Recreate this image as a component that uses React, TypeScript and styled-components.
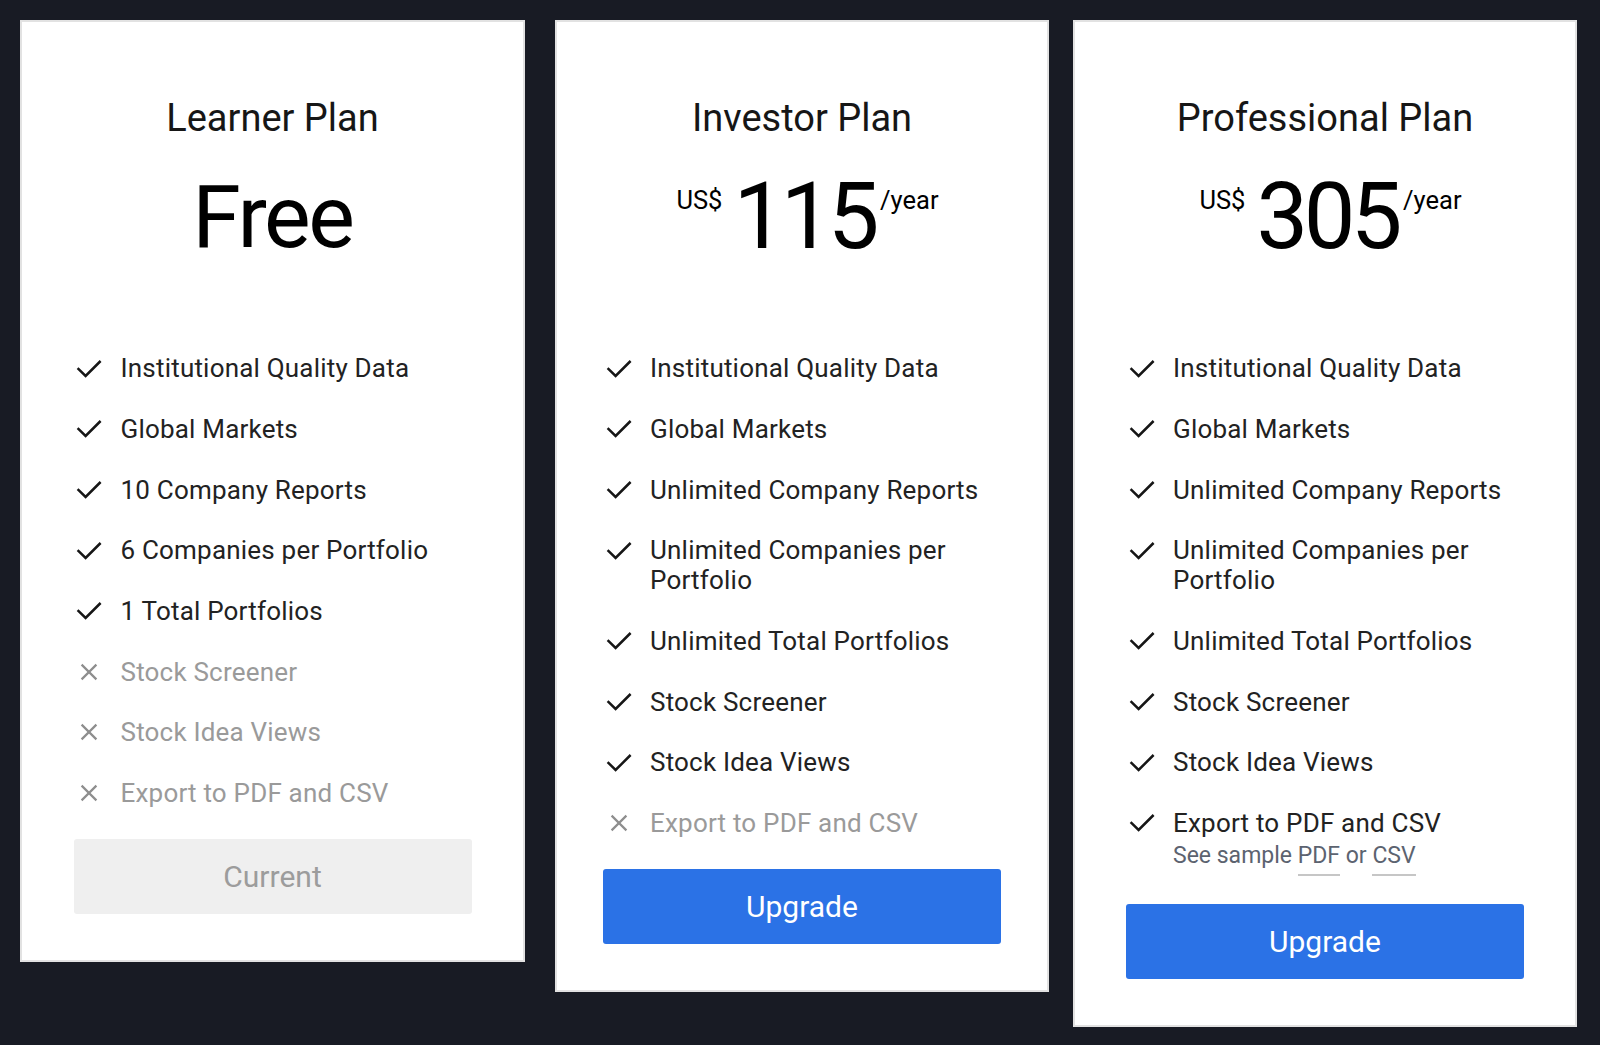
import React from 'react';
import styled, { createGlobalStyle } from 'styled-components';

const GlobalStyle = createGlobalStyle`
  html, body {
    margin: 0;
    padding: 0;
    background: #181b24;
  }
  body {
    font-family: Roboto, "Liberation Sans", Arial, sans-serif;
    -webkit-font-smoothing: antialiased;
  }
  * { box-sizing: border-box; }
`;

const Page = styled.main`
  display: flex;
  align-items: flex-start;
  padding: 20px 0 0 20px;
  min-height: 1045px;
`;

const Card = styled.section<{ $width: number; $gap: number }>`
  width: ${(p) => p.$width}px;
  margin-left: ${(p) => p.$gap}px;
  background: #ffffff;
  border: 2px solid #e2e2e2;
  padding: 73.7px 0 45.8px;
  display: flex;
  flex-direction: column;
  align-items: center;
`;

const Title = styled.h2`
  margin: 0;
  font-size: 38px;
  line-height: 44px;
  font-weight: 400;
  color: #161616;
`;

const PriceRow = styled.div<{ $shift: number }>`
  margin-top: 32.3px;
  height: 90px;
  display: flex;
  align-items: flex-start;
  padding-left: ${(p) => p.$shift}px;
  color: #000000;
`;

const Amount = styled.span<{ $size: number; $track: number }>`
  font-size: ${(p) => p.$size}px;
  letter-spacing: ${(p) => p.$track}px;
  line-height: 90px;
  font-weight: 400;
`;

const Sup = styled.span<{ $side: 'left' | 'right' }>`
  font-size: 25.5px;
  line-height: 26px;
  margin-top: 14.6px;
  margin-right: ${(p) => (p.$side === 'left' ? '11px' : '0')};
  margin-left: ${(p) => (p.$side === 'right' ? '5px' : '0')};
`;

const List = styled.ul`
  list-style: none;
  margin: 91.2px 0 0;
  padding: 0;
  width: 398px;
`;

const Item = styled.li<{ $off: boolean }>`
  display: flex;
  align-items: flex-start;
  margin-bottom: 30.7px;
  font-size: 26px;
  line-height: 30px;
  letter-spacing: 0.2px;
  color: ${(p) => (p.$off ? '#9a9a9a' : '#222222')};
`;

const IconBox = styled.span`
  flex: 0 0 31px;
  height: 30px;
  margin-right: 16px;
  display: flex;
  align-items: center;
  justify-content: center;
`;

const Label = styled.div`
  flex: 1;
  min-width: 0;
`;

const SubLine = styled.div`
  margin-top: 2.7px;
  height: 32.2px;
  font-size: 23px;
  line-height: 30px;
  letter-spacing: 0;
  color: #5c6370;
`;

const SampleLink = styled.a`
  display: inline-block;
  color: inherit;
  text-decoration: none;
  padding-bottom: 3px;
  line-height: 30px;
  border-bottom: 2px solid #c6c6c6;
`;

const Button = styled.button<{ $primary: boolean }>`
  width: 398px;
  height: 75.5px;
  border: none;
  border-radius: 3px;
  font-family: inherit;
  font-size: 30px;
  font-weight: 400;
  display: flex;
  align-items: center;
  justify-content: center;
  cursor: pointer;
  background: ${(p) => (p.$primary ? '#2b72e6' : '#efefef')};
  color: ${(p) => (p.$primary ? '#ffffff' : '#9c9c9c')};
`;

const CheckIcon = () => (
  <svg width="26" height="19" viewBox="0 0 26 19" fill="none">
    <polyline points="1.6,9.2 9.6,17 24.6,2" stroke="#161616" strokeWidth="2.5" strokeLinejoin="miter" />
  </svg>
);

const CrossIcon = () => (
  <svg width="18" height="18" viewBox="0 0 18 18" fill="none">
    <path d="M1.6 1.6 L16.4 16.4 M16.4 1.6 L1.6 16.4" stroke="#8e8e8e" strokeWidth="2.2" />
  </svg>
);

type Feature = { text: string; on: boolean; sample?: boolean };

type Plan = {
  name: string;
  width: number;
  gap: number;
  price?: string;
  freeLabel?: string;
  features: Feature[];
  current: boolean;
};

const base = (reports: string, perPortfolio: string, total: string): Feature[] => [
  { text: 'Institutional Quality Data', on: true },
  { text: 'Global Markets', on: true },
  { text: reports, on: true },
  { text: perPortfolio, on: true },
  { text: total, on: true },
];

const plans: Plan[] = [
  {
    name: 'Learner Plan',
    width: 505,
    gap: 0,
    freeLabel: 'Free',
    current: true,
    features: [
      ...base('10 Company Reports', '6 Companies per Portfolio', '1 Total Portfolios'),
      { text: 'Stock Screener', on: false },
      { text: 'Stock Idea Views', on: false },
      { text: 'Export to PDF and CSV', on: false },
    ],
  },
  {
    name: 'Investor Plan',
    width: 494,
    gap: 30,
    price: '115',
    current: false,
    features: [
      ...base('Unlimited Company Reports', 'Unlimited Companies per Portfolio', 'Unlimited Total Portfolios'),
      { text: 'Stock Screener', on: true },
      { text: 'Stock Idea Views', on: true },
      { text: 'Export to PDF and CSV', on: false },
    ],
  },
  {
    name: 'Professional Plan',
    width: 504,
    gap: 24,
    price: '305',
    current: false,
    features: [
      ...base('Unlimited Company Reports', 'Unlimited Companies per Portfolio', 'Unlimited Total Portfolios'),
      { text: 'Stock Screener', on: true },
      { text: 'Stock Idea Views', on: true },
      { text: 'Export to PDF and CSV', on: true, sample: true },
    ],
  },
];

const PlanCard = ({ plan }: { plan: Plan }) => (
  <Card $width={plan.width} $gap={plan.gap}>
    <Title>{plan.name}</Title>
    {plan.freeLabel ? (
      <PriceRow $shift={0}>
        <Amount $size={88} $track={-2.4}>{plan.freeLabel}</Amount>
      </PriceRow>
    ) : (
      <PriceRow $shift={11}>
        <Sup $side="left">US$</Sup>
        <Amount $size={92} $track={-4.5}>{plan.price}</Amount>
        <Sup $side="right">/year</Sup>
      </PriceRow>
    )}
    <List>
      {plan.features.map((f) => (
        <Item key={f.text} $off={!f.on}>
          <IconBox>{f.on ? <CheckIcon /> : <CrossIcon />}</IconBox>
          <Label>
            {f.text}
            {f.sample && (
              <SubLine>
                See sample <SampleLink href="#pdf">PDF</SampleLink> or{' '}
                <SampleLink href="#csv">CSV</SampleLink>
              </SubLine>
            )}
          </Label>
        </Item>
      ))}
    </List>
    <Button $primary={!plan.current}>{plan.current ? 'Current' : 'Upgrade'}</Button>
  </Card>
);

export default function App() {
  return (
    <>
      <GlobalStyle />
      <Page>
        {plans.map((p) => (
          <PlanCard key={p.name} plan={p} />
        ))}
      </Page>
    </>
  );
}
